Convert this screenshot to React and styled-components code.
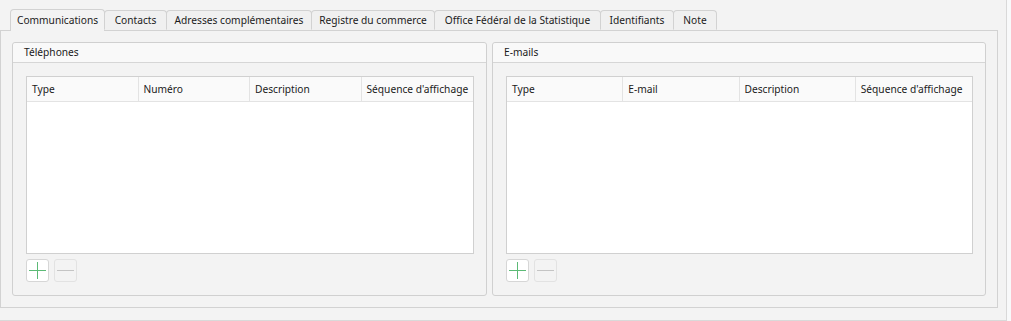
import React from 'react'
import styled, { createGlobalStyle } from 'styled-components'

const GlobalStyle = createGlobalStyle`
  html, body {
    margin: 0;
    padding: 0;
    background: #f8f9fa;
  }
  body {
    font-family: "Noto Sans", "Liberation Sans", sans-serif;
    font-size: 10.2px;
    color: #1b1b1b;
  }
`

const Frame = styled.div`
  width: 998px;
  height: 308px;
  padding: 0 8px 12px 0;
  background: #f3f3f3;
  border-right: 1px solid #d9d9d9;
  border-bottom: 1px solid #d9d9d9;
  display: flex;
  flex-direction: column;
`

const TabBar = styled.div`
  display: flex;
  align-items: flex-end;
  height: 30px;
  padding-left: 10px;
  position: relative;
  z-index: 1;
`

const Tab = styled.div`
  box-sizing: border-box;
  width: ${p => p.$w}px;
  height: ${p => (p.$active ? 22 : 20)}px;
  margin-left: -1px;
  margin-bottom: ${p => (p.$active ? -1 : 0)}px;
  display: flex;
  align-items: center;
  justify-content: center;
  padding-bottom: ${p => (p.$active ? 2 : 0)}px;
  border: 1px solid #d2d2d2;
  border-bottom: ${p => (p.$active ? 'none' : '1px solid transparent')};
  border-radius: 4px 4px 0 0;
  background: ${p => (p.$active ? '#f3f3f3' : '#f0f0f0')};
  white-space: nowrap;
  &:first-child { margin-left: 0; }
`

const Pane = styled.div`
  box-sizing: border-box;
  height: 278px;
  border: 1px solid #d2d2d2;
  padding: 11px;
  display: grid;
  grid-template-columns: 475px 494px;
  column-gap: 5px;
`

const Group = styled.div`
  border: 1px solid #d0d0d0;
  border-radius: 3px;
  display: flex;
  flex-direction: column;
  min-height: 0;
`

const GroupTitle = styled.div`
  height: 19px;
  line-height: 19px;
  padding-left: 11px;
  background: #f9f9f9;
  border-bottom: 1px solid #d6d6d6;
  border-radius: 3px 3px 0 0;
`

const GroupBody = styled.div`
  flex: 1;
  display: flex;
  flex-direction: column;
  padding: 13px 12px 13px 13px;
  min-height: 0;
`

const Table = styled.div`
  flex: 1;
  background: #ffffff;
  border: 1px solid #d0d0d0;
`

const HeaderRow = styled.div`
  display: grid;
  grid-template-columns: repeat(4, 1fr);
  height: 24px;
  background: #fafafa;
  border-bottom: 1px solid #e3e3e3;
`

const HeaderCell = styled.div`
  display: flex;
  align-items: center;
  padding-left: 5px;
  border-right: 1px solid #e3e3e3;
  white-space: nowrap;
  overflow: hidden;
  &:last-child { border-right: none; }
`

const ButtonRow = styled.div`
  display: flex;
  gap: 5px;
  margin-top: 5px;
`

const ToolButton = styled.button`
  box-sizing: border-box;
  width: 23px;
  height: 23px;
  padding: 0;
  display: flex;
  align-items: center;
  justify-content: center;
  border: 1px solid ${p => (p.disabled ? '#e2e2e2' : '#d6d6d6')};
  border-radius: 3px;
  background: ${p => (p.disabled ? 'transparent' : '#ffffff')};
`

const PlusIcon = () => (
  <svg width="17" height="17" viewBox="0 0 17 17">
    <path d="M0 8.5H17M8.5 0V17" stroke="#5cba76" strokeWidth="1" />
  </svg>
)

const MinusIcon = () => (
  <svg width="17" height="17" viewBox="0 0 17 17">
    <path d="M0 8.5H17" stroke="#c4c4c4" strokeWidth="1" />
  </svg>
)

const tabs = [
  { label: 'Communications', w: 95 },
  { label: 'Contacts', w: 63 },
  { label: 'Adresses complémentaires', w: 146 },
  { label: 'Registre du commerce', w: 124 },
  { label: 'Office Fédéral de la Statistique', w: 167 },
  { label: 'Identifiants', w: 74 },
  { label: 'Note', w: 44 },
]

function ListGroup({ title, columns }) {
  return (
    <Group>
      <GroupTitle>{title}</GroupTitle>
      <GroupBody>
        <Table>
          <HeaderRow>
            {columns.map(c => <HeaderCell key={c}>{c}</HeaderCell>)}
          </HeaderRow>
        </Table>
        <ButtonRow>
          <ToolButton><PlusIcon /></ToolButton>
          <ToolButton disabled><MinusIcon /></ToolButton>
        </ButtonRow>
      </GroupBody>
    </Group>
  )
}

export default function App() {
  return (
    <>
      <GlobalStyle />
      <Frame>
        <TabBar>
          {tabs.map((t, i) => (
            <Tab key={t.label} $w={t.w} $active={i === 0}>{t.label}</Tab>
          ))}
        </TabBar>
        <Pane>
          <ListGroup
            title="Téléphones"
            columns={['Type', 'Numéro', 'Description', "Séquence d'affichage"]}
          />
          <ListGroup
            title="E-mails"
            columns={['Type', 'E-mail', 'Description', "Séquence d'affichage"]}
          />
        </Pane>
      </Frame>
    </>
  )
}
